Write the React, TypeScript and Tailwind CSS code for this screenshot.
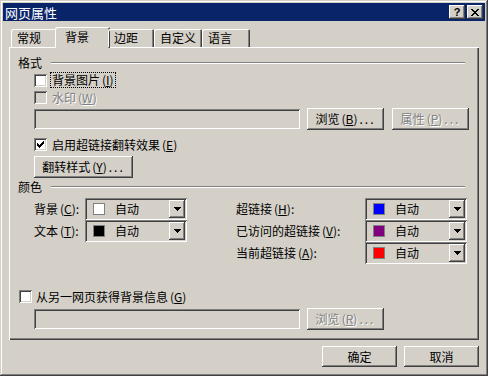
import type { ReactNode } from "react";

const raised =
  "shadow-[inset_-1px_-1px_#404040,inset_1px_1px_#ffffff,inset_-2px_-2px_#808080,inset_2px_2px_#d4d0c8]";
const sunken =
  "shadow-[inset_1px_1px_#808080,inset_-1px_-1px_#ffffff,inset_2px_2px_#404040,inset_-2px_-2px_#d4d0c8]";
const grayText = "text-[#808080] [text-shadow:1px_1px_#ffffff]";

function Key({ c }: { c: string }) {
  return (
    <span className="ml-[2px]">
      (<span className="underline underline-offset-1">{c}</span>)
    </span>
  );
}

const Dots = () => <span className="ml-[2px] tracking-[2px]">...</span>;

function Check({ checked = false, disabled = false }: { checked?: boolean; disabled?: boolean }) {
  return (
    <div
      className={`w-[13px] h-[13px] shrink-0 flex items-center justify-center ${sunken} ${
        disabled ? "bg-[#d4d0c8]" : "bg-white"
      }`}
    >
      {checked && (
        <svg width="7" height="7" viewBox="0 0 7 7" shapeRendering="crispEdges">
          <path d="M0 2h1v1h1v1h1V3h1V2h1V1h1V0h1v3H6v1H5v1H4v1H3v1H2V6H1V5H0z" fill="#000" />
        </svg>
      )}
    </div>
  );
}

function Button({
  children,
  width,
  height = "h-[22px]",
  disabled = false,
}: {
  children: ReactNode;
  width: string;
  height?: string;
  disabled?: boolean;
}) {
  return (
    <div
      className={`${width} ${height} shrink-0 flex items-center justify-center bg-[#d4d0c8] ${raised} ${
        disabled ? grayText : ""
      }`}
    >
      {children}
    </div>
  );
}

function Field() {
  return <div className={`w-[266px] h-[20px] shrink-0 bg-[#d4d0c8] ${sunken}`} />;
}

function GroupLabel({ text }: { text: string }) {
  return (
    <div className="flex items-center h-[12px] pr-[14px]">
      <span>{text}</span>
      <div className="flex-1 ml-[9px] h-[2px] border-t border-t-[#808080] bg-white" />
    </div>
  );
}

function Combo({ swatch }: { swatch: string }) {
  return (
    <div className={`w-[102px] h-[22px] flex items-center p-[2px] bg-[#d4d0c8] ${sunken}`}>
      <div className="flex-1 flex items-center pl-[6px]">
        <div className={`w-[12px] h-[12px] border border-[#808080] ${swatch}`} />
        <span className="ml-[10px]">自动</span>
      </div>
      <div className={`w-[16px] h-[18px] flex items-center justify-center ${raised}`}>
        <svg width="7" height="4" viewBox="0 0 7 4" shapeRendering="crispEdges">
          <path d="M0 0h7v1H6v1H5v1H4v1H3V3H2V2H1V1H0z" fill="#000" />
        </svg>
      </div>
    </div>
  );
}

function ColorRow({ label, swatch, labelWidth }: { label: ReactNode; swatch: string; labelWidth: string }) {
  return (
    <div className="flex items-center h-[22px]">
      <span className={labelWidth}>{label}</span>
      <Combo swatch={swatch} />
    </div>
  );
}

const tabs = ["常规", "背景", "边距", "自定义", "语言"];
const tabWidths = ["w-[46px]", "w-[55px]", "w-[46px]", "w-[48px]", "w-[48px]"];

export default function App() {
  return (
    <div className="w-[488px] h-[376px] p-[3px] flex flex-col bg-[#d4d0c8] text-black text-[12px] leading-none font-['Noto_Sans_CJK_SC','Liberation_Sans',sans-serif] shadow-[inset_-1px_-1px_#404040,inset_1px_1px_#d4d0c8,inset_-2px_-2px_#808080,inset_2px_2px_#ffffff]">
      {/* Title bar */}
      <div className="h-[18px] flex items-center bg-[#0a246a] pl-[2px] pr-[2px]">
        <span className="text-white text-[13px]">网页属性</span>
        <div className="ml-auto flex gap-[2px]">
          <div className={`w-[16px] h-[14px] flex items-center justify-center bg-[#d4d0c8] ${raised}`}>
            <span className="font-bold text-[11px] font-['Liberation_Sans',sans-serif]">?</span>
          </div>
          <div className={`w-[16px] h-[14px] flex items-center justify-center bg-[#d4d0c8] ${raised}`}>
            <svg width="8" height="7" viewBox="0 0 8 7" shapeRendering="crispEdges">
              <path
                d="M0 0h2v1h1v1h2V1h1V0h2v1H7v1H6v1H5v1h1v1h1v1h1v1H6V6H5V5H3v1H2v1H0V6h1V5h1V4h1V3H2V2H1V1H0z"
                fill="#000"
              />
            </svg>
          </div>
        </div>
      </div>

      <div className="mx-[6px] mt-[6px] flex flex-col">
        {/* Tabs */}
        <div className="relative z-10 flex items-end h-[20px] pl-[2px]">
          {tabs.map((t, i) =>
            i === 1 ? (
              <div
                key={t}
                className={`${tabWidths[i]} -mx-[2px] h-[21px] -mb-[1px] pl-[10px] pt-[4px] bg-[#d4d0c8] rounded-t-[2px] shadow-[inset_1px_1px_#ffffff,inset_-1px_0_#404040,inset_-2px_0_#808080]`}
              >
                {t}
              </div>
            ) : (
              <div
                key={t}
                className={`${tabWidths[i]} h-[18px] pl-[6px] pt-[3px] rounded-t-[2px] shadow-[inset_1px_1px_#ffffff,inset_-1px_0_#404040,inset_-2px_0_#808080]`}
              >
                {t}
              </div>
            )
          )}
        </div>

        {/* Panel */}
        <div className="h-[293px] flex flex-col pl-[9px] shadow-[inset_1px_1px_#ffffff,inset_-1px_-1px_#404040,inset_-2px_-2px_#808080]">
          <div className="mt-[10px]">
            <GroupLabel text="格式" />
          </div>

          <div className="mt-[3px] h-[16px] flex items-center pl-[16px]">
            <Check />
            <span className="ml-[3px] h-[16px] flex items-center px-[1px] border border-dotted border-black">
              背景图片<Key c="I" />
            </span>
          </div>

          <div className="mt-[3px] h-[13px] flex items-center pl-[16px]">
            <Check disabled />
            <span className={`ml-[5px] ${grayText}`}>
              水印<Key c="W" />
            </span>
          </div>

          <div className="mt-[4px] h-[22px] flex items-center pl-[16px]">
            <Field />
            <div className="ml-[7px]">
              <Button width="w-[77px]">
                浏览<Key c="B" />
                <Dots />
              </Button>
            </div>
            <div className="ml-[8px]">
              <Button width="w-[77px]" disabled>
                属性<Key c="P" />
                <Dots />
              </Button>
            </div>
          </div>

          <div className="mt-[8px] h-[13px] flex items-center pl-[16px]">
            <Check checked />
            <span className="ml-[5px]">
              启用超链接翻转效果<Key c="E" />
            </span>
          </div>

          <div className="mt-[5px] pl-[16px]">
            <Button width="w-[99px]">
              翻转样式<Key c="Y" />
              <Dots />
            </Button>
          </div>

          <div className="mt-[3px]">
            <GroupLabel text="颜色" />
          </div>

          <div className="mt-[5px] flex pl-[16px]">
            <div className="flex flex-col">
              <ColorRow labelWidth="w-[51px]" label={<>背景<Key c="C" />:</>} swatch="bg-white" />
              <ColorRow labelWidth="w-[51px]" label={<>文本<Key c="T" />:</>} swatch="bg-black" />
            </div>
            <div className="ml-[49px] flex flex-col">
              <ColorRow labelWidth="w-[129px]" label={<>超链接<Key c="H" />:</>} swatch="bg-[#0000ff]" />
              <ColorRow labelWidth="w-[129px]" label={<>已访问的超链接<Key c="V" />:</>} swatch="bg-[#800080]" />
              <ColorRow labelWidth="w-[129px]" label={<>当前超链接<Key c="A" />:</>} swatch="bg-[#ff0000]" />
            </div>
          </div>

          <div className="mt-[26px] h-[13px] flex items-center pl-[1px]">
            <Check />
            <span className="ml-[4px]">
              从另一网页获得背景信息<Key c="G" />
            </span>
          </div>

          <div className="mt-[5px] h-[22px] flex items-center pl-[16px]">
            <Field />
            <div className="ml-[7px]">
              <Button width="w-[77px]" disabled>
                浏览<Key c="R" />
                <Dots />
              </Button>
            </div>
          </div>
        </div>

        {/* Footer */}
        <div className="mt-[6px] flex justify-end gap-[7px]">
          <Button width="w-[75px]" height="h-[21px]">
            确定
          </Button>
          <Button width="w-[75px]" height="h-[21px]">
            取消
          </Button>
        </div>
      </div>
    </div>
  );
}
